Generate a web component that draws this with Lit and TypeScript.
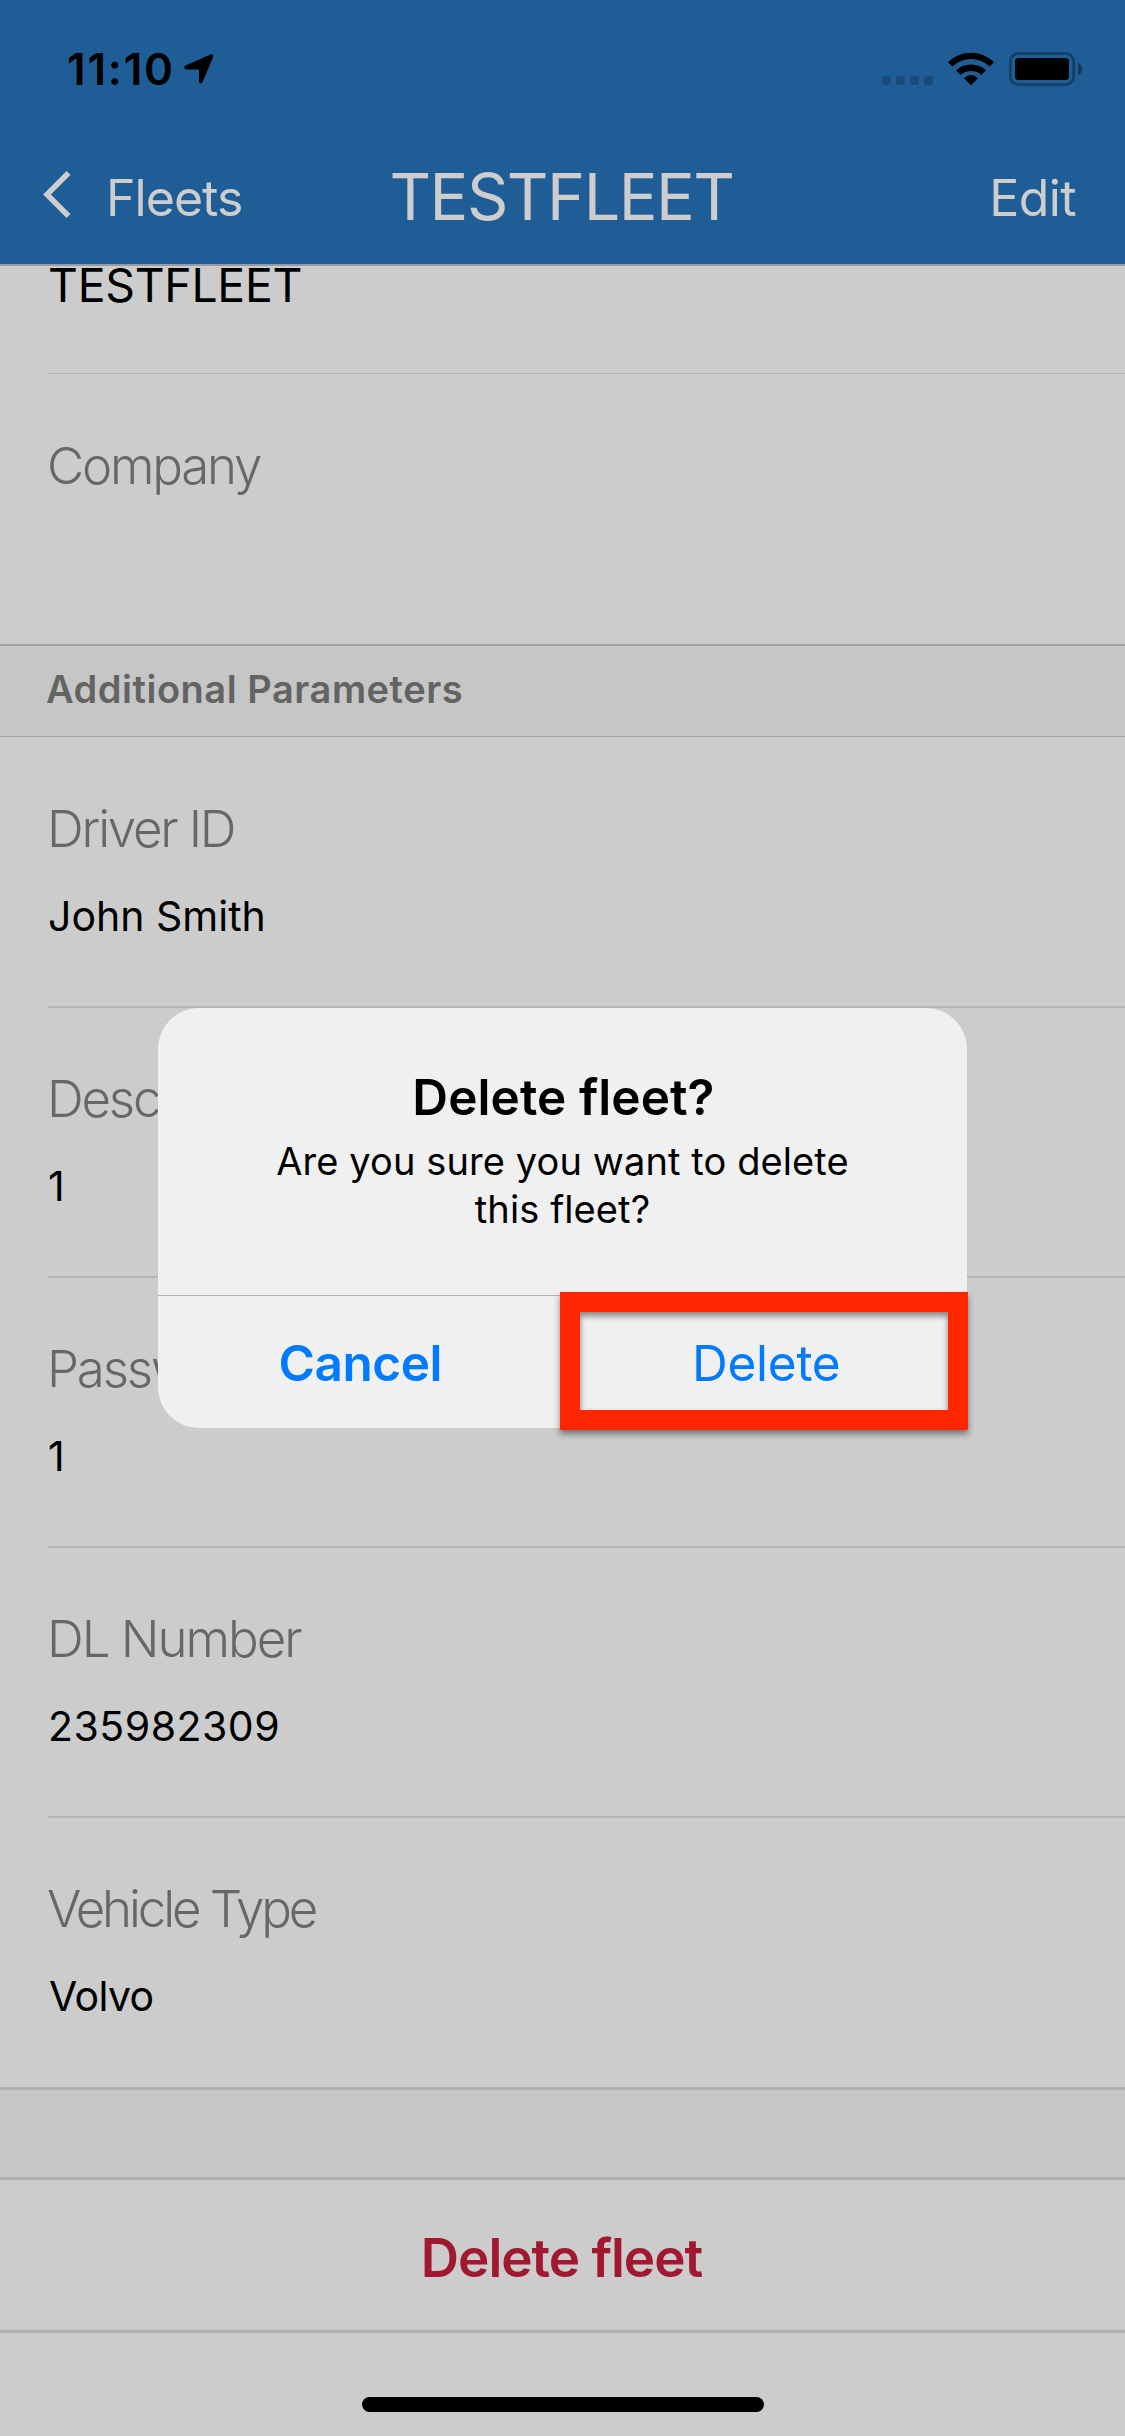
import { LitElement, html, css, svg } from "lit";
import { classMap } from "lit/directives/class-map.js";

interface Field {
  label: string;
  value: string;
  tone?: string;
}

const PARAMETERS: Field[] = [
  { label: "Driver ID", value: "John Smith" },
  { label: "Description", value: "1" },
  { label: "Password", value: "1" },
  { label: "DL Number", value: "235982309", tone: "numeric" },
  { label: "Vehicle Type", value: "Volvo", tone: "kerned" },
];

class StatusBar extends LitElement {
  static styles = css`
    :host {
      display: flex;
      height: 132px;
      box-sizing: border-box;
      padding: 42px 43px 0 67px;
      justify-content: space-between;
      align-items: flex-start;
    }
    .side {
      display: flex;
      align-items: flex-start;
    }
    .time {
      font-size: 44px;
      line-height: 54px;
      font-weight: 600;
      letter-spacing: 1.8px;
      color: #000;
    }
    .arrow {
      margin: 11px 0 0 8px;
    }
    svg {
      display: block;
    }
    .icons {
      margin-top: 9px;
    }
  `;
  render() {
    return html`
      <div class="side">
        <span class="time">11:10</span>
        <svg class="arrow" width="32" height="32" viewBox="0 0 32 32">
          <path
            d="M2.4 12.6 27.6 1.5c1.8-.7 3.2.6 2.5 2.5L19.6 29c-.8 1.9-3.6 1.6-3.6-.7V16.4H3.3c-2.2 0-2.8-2.9-.9-3.8z"
          />
        </svg>
      </div>
      <svg class="icons" width="202" height="36" viewBox="880 51 202 36">
        ${[882, 896, 910, 924].map(
          (x) => svg`<rect x=${x} y="76" width="9" height="9" rx="3" fill="#1a4b78" />`,
        )}
        <path d="M948 62a33.5 33.5 0 0 1 46 0l-4.300 4.600a27 27 0 0 0-37.400 0z" />
        <path d="M956 70.3a22 22 0 0 1 30 0l-4.600 4.700a15.600 15.600 0 0 0-20.800 0z" />
        <path d="M964 78.3q7-6.400 14 0l-7 6.900z" />
        <rect x="1010.3" y="53.3" width="63.4" height="31.4" rx="8.5" fill="none" stroke="#153f65" stroke-width="2.7" />
        <rect x="1015" y="58" width="54" height="22" rx="3.5" />
        <path d="M1078 62.5q4 2 4 6.500t-4 6.500z" fill="#153a5c" />
      </svg>
    `;
  }
}
customElements.define("status-bar", StatusBar);

class NavBar extends LitElement {
  static styles = css`
    :host {
      display: grid;
      grid-template-columns: 1fr auto 1fr;
      height: 134px;
      box-sizing: border-box;
      padding: 0 49px 0 42px;
      border-bottom: 2px solid #9a9a9a;
      color: #cdcdcd;
      font-size: 50px;
      line-height: 60px;
    }
    .back {
      display: flex;
      align-items: flex-start;
      padding-top: 36px;
      letter-spacing: -0.96px;
    }
    .chevron {
      display: block;
      margin: 3px 34px 0 0;
    }
    .title {
      padding-top: 34.5px;
      margin-left: 5px;
      font-size: 64.6px;
      letter-spacing: -1.5px;
    }
    .edit {
      padding-top: 36px;
      text-align: right;
      letter-spacing: -0.59px;
    }
  `;
  render() {
    return html`
      <div class="back">
        <svg class="chevron" width="30" height="48" viewBox="0 0 30 48">
          <path d="M26.5 2 5 23.500l21.500 21.500" fill="none" stroke="#cdcdcd" stroke-width="5.5" />
        </svg>
        <span>Fleets</span>
      </div>
      <div class="title">TESTFLEET</div>
      <div class="edit">Edit</div>
    `;
  }
}
customElements.define("nav-bar", NavBar);

class ConfirmDialog extends LitElement {
  static styles = css`
    :host {
      display: flex;
      flex-direction: column;
      width: 809px;
      height: 420px;
      box-sizing: border-box;
      border-radius: 41px;
      background: #f0f0f0;
      color: #000;
      text-align: center;
    }
    .body {
      height: 287px;
      box-sizing: border-box;
      padding-top: 59px;
    }
    .title {
      padding-left: 2px;
      font-size: 49.5px;
      line-height: 60px;
      font-weight: 600;
      letter-spacing: 0.09px;
    }
    .message {
      padding-top: 10px;
      font-size: 38px;
      line-height: 48px;
      letter-spacing: 0.1px;
    }
    .actions {
      position: relative;
      display: grid;
      grid-template-columns: 1fr 1fr;
      flex: 1;
      border-top: 1px solid #b1b2b2;
      color: #007aff;
      font-size: 49.5px;
      line-height: 60px;
    }
    .action {
      padding-top: 36.5px;
      padding-left: 3px;
      letter-spacing: -0.27px;
    }
    .primary {
      padding-left: 0;
      font-weight: 600;
      letter-spacing: -0.46px;
    }
    .highlight {
      position: absolute;
      left: 402px;
      top: -4px;
      width: 408px;
      height: 138px;
      box-sizing: border-box;
      border: 20px solid #ff2600;
      filter: drop-shadow(0 4px 3px rgba(0, 0, 0, 0.45));
    }
  `;
  render() {
    return html`
      <div class="body">
        <div class="title">Delete fleet?</div>
        <div class="message">Are you sure you want to delete<br />this fleet?</div>
      </div>
      <div class="actions">
        <div class="action primary">Cancel</div>
        <div class="action">Delete</div>
        <div class="highlight"></div>
      </div>
    `;
  }
}
customElements.define("confirm-dialog", ConfirmDialog);

class AppRoot extends LitElement {
  static styles = css`
    :host {
      display: block;
      position: relative;
      width: 1125px;
      height: 2436px;
      overflow: hidden;
      background: #ccc;
      color: #000;
      font-family: Inter, "Liberation Sans", sans-serif;
      font-kerning: normal;
    }
    .header {
      background: #1f5d96;
    }
    .name {
      height: 107px;
      padding-left: 48px;
      font-size: 46.3px;
      line-height: 39px;
      letter-spacing: -0.25px;
    }
    .field {
      height: 268px;
      padding-left: 47px;
      padding-top: 60.5px;
      box-sizing: border-box;
    }
    .rule {
      height: 2px;
      margin-left: 48px;
      background: #b4b4b4;
    }
    .rule.thin {
      height: 1px;
    }
    .lead {
      height: 269px;
      padding-top: 61.5px;
    }
    .company {
      height: 270px;
      padding-top: 61.5px;
    }
    .last {
      height: 269px;
    }
    .label {
      font-size: 51px;
      line-height: 60px;
      font-weight: 300;
      letter-spacing: -2.2px;
      color: #676767;
    }
    .value {
      margin-top: 32.5px;
      padding-left: 1px;
      font-size: 41px;
      line-height: 50px;
    }
    .numeric .label {
      letter-spacing: -2px;
    }
    .numeric .value {
      letter-spacing: 0.5px;
    }
    .kerned .label {
      letter-spacing: -3.1px;
    }
    .kerned .value {
      padding-left: 2px;
      letter-spacing: -0.67px;
    }
    .section {
      height: 93px;
      box-sizing: border-box;
      border-top: 2px solid #a0a0a0;
      border-bottom: 1px solid #a0a0a0;
      background: #c6c6c6;
      padding: 17.5px 0 0 46px;
      font-size: 38px;
      line-height: 50px;
      font-weight: 600;
      letter-spacing: 0.52px;
      color: #636363;
    }
    .spacer {
      height: 93px;
      box-sizing: border-box;
      border-top: 3px solid #afafaf;
      border-bottom: 3px solid #afafaf;
      background: #c6c6c6;
    }
    .remove {
      height: 153px;
      box-sizing: border-box;
      border-bottom: 3px solid #afafaf;
      padding: 48px 2px 0 0;
      text-align: center;
      font-size: 53px;
      line-height: 60px;
      font-weight: 600;
      letter-spacing: -1.02px;
      color: #a01931;
    }
    .home {
      width: 402px;
      height: 15px;
      margin: 64px auto 0;
      border-radius: 8px;
      background: #000;
    }
    .dialog {
      position: absolute;
      left: 158px;
      top: 1008px;
    }
  `;

  private field(f: Field, i: number) {
    const first = i === 0;
    const last = i === PARAMETERS.length - 1;
    const classes = { field: true, lead: first, last, [f.tone ?? "plain"]: true };
    return html`
      <div class=${classMap(classes)}>
        <div class="label">${f.label}</div>
        <div class="value">${f.value}</div>
      </div>
      ${last ? "" : html`<div class="rule"></div>`}
    `;
  }

  render() {
    return html`
      <div class="header">
        <status-bar></status-bar>
        <nav-bar></nav-bar>
      </div>
      <div class="name">TESTFLEET</div>
      <div class="rule thin"></div>
      <div class="field company"><div class="label">Company</div></div>
      <div class="section">Additional Parameters</div>
      ${PARAMETERS.map((f, i) => this.field(f, i))}
      <div class="spacer"></div>
      <div class="remove">Delete fleet</div>
      <div class="home"></div>
      <confirm-dialog class="dialog"></confirm-dialog>
    `;
  }
}
customElements.define("app-root", AppRoot);
